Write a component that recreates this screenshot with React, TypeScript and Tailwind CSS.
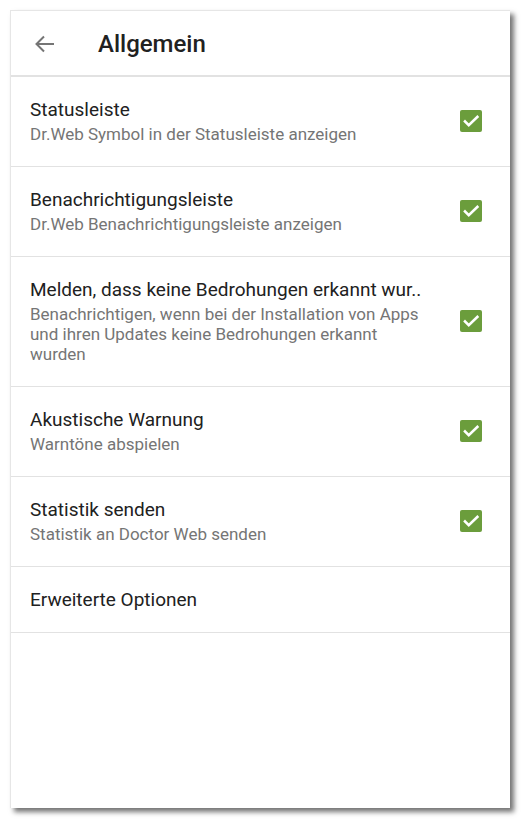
import React from "react";

function Check() {
  return (
    <div className="w-[22px] h-[22px] rounded-[2px] bg-[#6b9d3c] flex items-center justify-center shrink-0">
      <svg width="18" height="18" viewBox="0 0 24 24" fill="none">
        <path d="M4 12.5l5 5L20.5 6.5" stroke="white" strokeWidth="3.4" strokeLinecap="square" />
      </svg>
    </div>
  );
}

type Item = { title: string; sub?: string[]; check?: boolean };

const items: Item[] = [
  { title: "Statusleiste", sub: ["Dr.Web Symbol in der Statusleiste anzeigen"], check: true },
  { title: "Benachrichtigungsleiste", sub: ["Dr.Web Benachrichtigungsleiste anzeigen"], check: true },
  {
    title: "Melden, dass keine Bedrohungen erkannt wur..",
    sub: ["Benachrichtigen, wenn bei der Installation von Apps", "und ihren Updates keine Bedrohungen erkannt", "wurden"],
    check: true,
  },
  { title: "Akustische Warnung", sub: ["Warntöne abspielen"], check: true },
  { title: "Statistik senden", sub: ["Statistik an Doctor Web senden"], check: true },
];

export default function App() {
  return (
    <div className="w-[521px] h-[819px] bg-white pt-[10px] pl-[10px]" style={{ fontFamily: "Roboto, 'Noto Sans', sans-serif" }}>
      <div className="w-[500px] h-[798px] bg-white border-t border-l border-[#e6e6e6] shadow-[4px_4px_5px_rgba(0,0,0,0.55)] flex flex-col">
        <div className="h-[66px] flex items-center border-b-2 border-[#e2e2e2] shrink-0 pt-[1px]">
          <div className="w-[87px] pl-[22px] flex items-center">
            <svg width="24" height="24" viewBox="0 0 24 24" fill="none">
              <path d="M21 12H4M11 4.5L3.5 12l7.5 7.5" stroke="#757575" strokeWidth="2" />
            </svg>
          </div>
          <div className="text-[24px] font-medium text-[#212121] leading-none">Allgemein</div>
        </div>
        {items.map((it, i) => (
          <div key={i} className="flex items-center border-b border-[#e2e2e2] pl-[19px] pr-[28px] pt-[21px] pb-[22px]">
            <div className="flex-1 flex flex-col gap-[2px]">
              <div className="text-[19px] leading-[24px] text-[#212121] whitespace-nowrap">{it.title}</div>
              {it.sub && (
                <div className="text-[17px] leading-[20px] text-[#757575]">
                  {it.sub.map((s, j) => (
                    <div key={j} className="whitespace-nowrap">{s}</div>
                  ))}
                </div>
              )}
            </div>
            {it.check && <Check />}
          </div>
        ))}
        <div className="flex items-center border-b border-[#e2e2e2] pl-[19px] h-[66px] pt-[1px]">
          <div className="text-[19px] leading-[24px] text-[#212121]">Erweiterte Optionen</div>
        </div>
      </div>
    </div>
  );
}
